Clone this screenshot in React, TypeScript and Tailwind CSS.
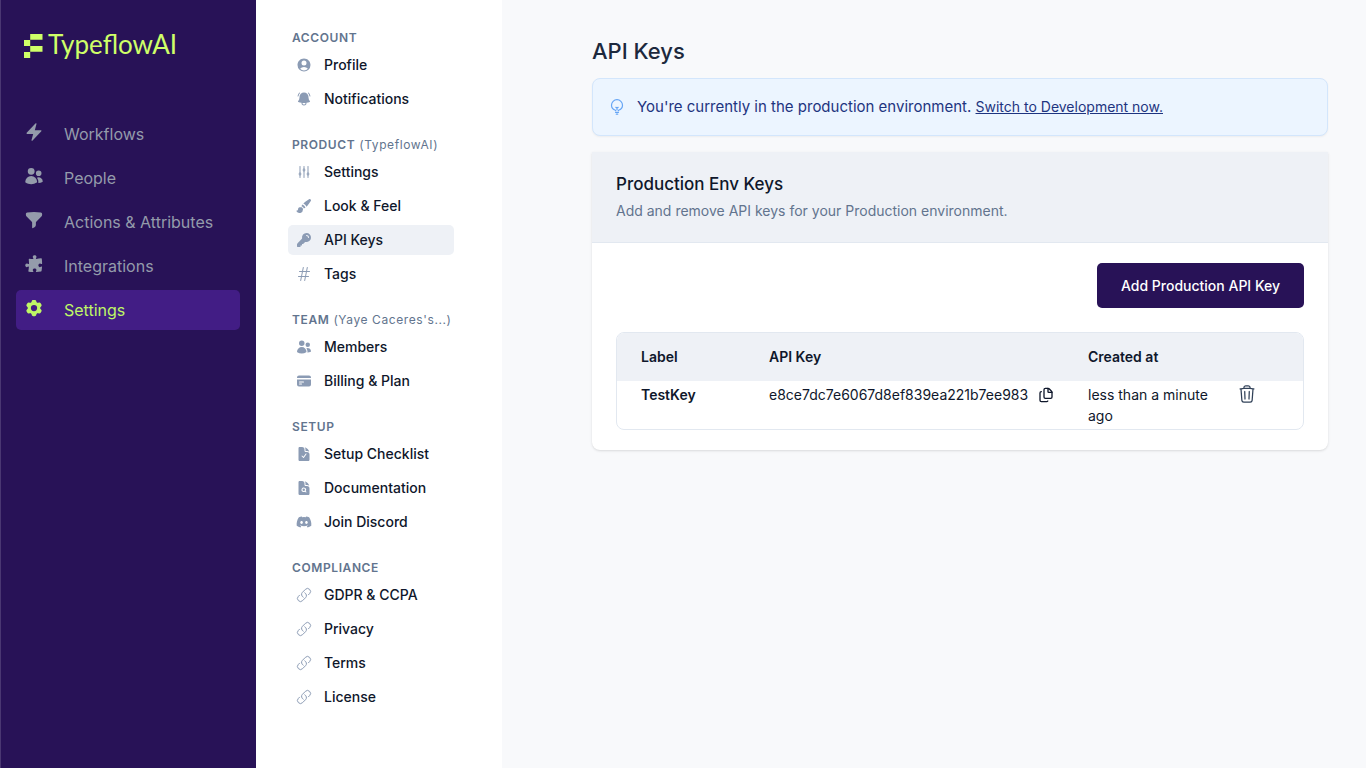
import type { ComponentType, ReactNode } from "react";
import {
  HiBolt,
  HiUsers,
  HiFunnel,
  HiPuzzlePiece,
  HiCog6Tooth,
  HiUserCircle,
  HiBellAlert,
  HiOutlineAdjustmentsVertical,
  HiPaintBrush,
  HiKey,
  HiOutlineHashtag,
  HiCreditCard,
  HiDocumentCheck,
  HiDocumentMagnifyingGlass,
  HiOutlineLink,
  HiOutlineTrash,
} from "react-icons/hi2";
import { FaDiscord } from "react-icons/fa";
import { Files } from "lucide-react";

type Icon = ComponentType<{ className?: string }>;
type Item = { label: string; icon: Icon; active?: boolean };

const mainItems: Item[] = [
  { label: "Workflows", icon: HiBolt },
  { label: "People", icon: HiUsers },
  { label: "Actions & Attributes", icon: HiFunnel },
  { label: "Integrations", icon: HiPuzzlePiece },
  { label: "Settings", icon: HiCog6Tooth, active: true },
];

const sections: { title: string; note?: string; items: Item[] }[] = [
  {
    title: "Account",
    items: [
      { label: "Profile", icon: HiUserCircle },
      { label: "Notifications", icon: HiBellAlert },
    ],
  },
  {
    title: "Product",
    note: "(TypeflowAI)",
    items: [
      { label: "Settings", icon: HiOutlineAdjustmentsVertical },
      { label: "Look & Feel", icon: HiPaintBrush },
      { label: "API Keys", icon: HiKey, active: true },
      { label: "Tags", icon: HiOutlineHashtag },
    ],
  },
  {
    title: "Team",
    note: "(Yaye Caceres's...)",
    items: [
      { label: "Members", icon: HiUsers },
      { label: "Billing & Plan", icon: HiCreditCard },
    ],
  },
  {
    title: "Setup",
    items: [
      { label: "Setup Checklist", icon: HiDocumentCheck },
      { label: "Documentation", icon: HiDocumentMagnifyingGlass },
      { label: "Join Discord", icon: FaDiscord },
    ],
  },
  {
    title: "Compliance",
    items: [
      { label: "GDPR & CCPA", icon: HiOutlineLink },
      { label: "Privacy", icon: HiOutlineLink },
      { label: "Terms", icon: HiOutlineLink },
      { label: "License", icon: HiOutlineLink },
    ],
  },
];

function Logo() {
  return (
    <a href="#home" className="flex items-center gap-[5px] pl-2 text-[#cfff68]">
      <svg className="mt-1 h-6 w-[19px]" viewBox="0 0 19 24" fill="currentColor" aria-hidden="true">
        <path d="M6.2 0H18.500V5.800H6.200ZM0 6H6.200V12H0ZM6.200 12H18.500V17.800H6.200ZM0 18H6.200V24H0Z" />
      </svg>
      <span className="font-[Lato] text-[26px] leading-8">TypeflowAI</span>
    </a>
  );
}

function BulbIcon({ className }: { className?: string }) {
  return (
    <svg
      className={className}
      viewBox="0 0 16 16"
      fill="none"
      stroke="currentColor"
      strokeWidth="1.2"
      strokeLinecap="round"
      strokeLinejoin="round"
      aria-hidden="true"
    >
      <path d="M6.500 11.700V11.200C3.900 10.400 2.500 8.500 2.500 6.200a5.500 5.500 0 0 1 11 0C13.500 8.500 12.100 10.400 9.500 11.200V11.700" />
      <path d="M8 11V8.800M6.800 8.300L8 9L9.200 8.300M6.500 13.300H9.500M7.300 15.200H8.700" />
    </svg>
  );
}

function Sidebar() {
  return (
    <aside className="w-64 shrink-0 border-l border-[#4a3772] bg-[#281257] pt-7 pr-4 pl-[15px]">
      <Logo />
      <nav aria-label="Main" className="mt-[54px] flex flex-col gap-1">
        {mainItems.map(({ label, icon: ItemIcon, active }) => (
          <a
            key={label}
            href="#main"
            className={
              active
                ? "flex h-10 items-center gap-5 rounded-[5px] bg-[#421d85] px-2 text-[#bff766]"
                : "flex h-10 items-center gap-5 rounded-[5px] px-2 text-[#949bab]"
            }
          >
            <ItemIcon className="mb-1 size-5" />
            <span>{label}</span>
          </a>
        ))}
      </nav>
    </aside>
  );
}

function SettingsNav() {
  return (
    <nav
      aria-label="Settings"
      className="flex w-[246px] shrink-0 flex-col gap-[21px] bg-white pt-7 pr-12 pl-8"
    >
      {sections.map(({ title, note, items }) => (
        <section key={title}>
          <h2 className="pl-1 text-xs leading-5 font-semibold tracking-wider text-slate-500">
            <span className="uppercase">{title}</span>
            {note && <span className="font-normal"> {note}</span>}
          </h2>
          <ul className="mt-[2px] flex flex-col gap-1">
            {items.map(({ label, icon: ItemIcon, active }) => (
              <li key={label}>
                <a
                  href="#settings"
                  className={
                    active
                      ? "flex h-[30px] items-center gap-3 rounded-[5px] bg-[#eef1f6] px-2 text-sm font-medium text-slate-900"
                      : "flex h-[30px] items-center gap-3 rounded-[5px] px-2 text-sm font-medium text-slate-900"
                  }
                >
                  <ItemIcon className="size-4 text-[#8b9bb4]" />
                  {label}
                </a>
              </li>
            ))}
          </ul>
        </section>
      ))}
    </nav>
  );
}

function HeadCell({ children }: { children?: ReactNode }) {
  return <th className="h-12 text-left font-semibold first:pl-6">{children}</th>;
}

function KeyTable() {
  return (
    <div className="overflow-hidden rounded-lg border border-slate-200">
      <table className="w-full table-fixed text-sm text-slate-900">
        <colgroup>
          <col className="w-[152px]" />
          <col />
          <col className="w-[127px]" />
          <col className="w-22" />
        </colgroup>
        <thead className="bg-[#eef1f6]">
          <tr>
            <HeadCell>Label</HeadCell>
            <HeadCell>API Key</HeadCell>
            <HeadCell>Created at</HeadCell>
            <HeadCell />
          </tr>
        </thead>
        <tbody>
          <tr className="align-top leading-[21px]">
            <td className="py-[3px] pl-6 font-semibold">TestKey</td>
            <td className="py-[3px]">
              <div className="flex items-center gap-2.5">
                <span>e8ce7dc7e6067d8ef839ea221b7ee983</span>
                <button type="button" aria-label="Copy API key">
                  <Files className="size-4" />
                </button>
              </div>
            </td>
            <td className="py-[3px]">less than a minute ago</td>
            <td className="py-[3px] pl-[22px]">
              <button type="button" aria-label="Delete API key" className="block text-slate-700">
                <HiOutlineTrash className="size-5" />
              </button>
            </td>
          </tr>
        </tbody>
      </table>
    </div>
  );
}

export default function App() {
  return (
    <div className="flex min-h-screen bg-[#f8f9fb] font-[Inter,sans-serif]">
      <Sidebar />
      <SettingsNav />
      <main className="min-w-0 flex-1 pt-8 pr-[38px] pl-[90px]">
        <h1 className="text-[22px] leading-[38px] font-medium text-slate-800">API Keys</h1>
        <div className="mt-2 flex h-[58px] items-center gap-3 rounded-lg border border-[#d3e6fc] bg-[#ecf5ff] px-4 text-[#1e3480] shadow-xs">
          <BulbIcon className="size-4 text-[#66a5f5]" />
          <p className="text-[15px]">
            You're currently in the production environment.{" "}
            <a href="#development" className="text-sm underline">
              Switch to Development now.
            </a>
          </p>
        </div>
        <section className="mt-4 overflow-hidden rounded-b-lg bg-white shadow-sm">
          <header className="border-b border-slate-200 bg-[#eef1f6] px-6 py-5">
            <h2 className="text-[17px] leading-6 font-medium text-slate-900">Production Env Keys</h2>
            <p className="mt-1 text-sm leading-[22px] text-slate-500">
              Add and remove API keys for your Production environment.
            </p>
          </header>
          <div className="px-6 py-5">
            <div className="flex justify-end">
              <button
                type="button"
                className="h-[45px] rounded-[5px] bg-[#281257] px-6 text-sm font-medium text-white"
              >
                Add Production API Key
              </button>
            </div>
            <div className="mt-6">
              <KeyTable />
            </div>
          </div>
        </section>
      </main>
    </div>
  );
}
